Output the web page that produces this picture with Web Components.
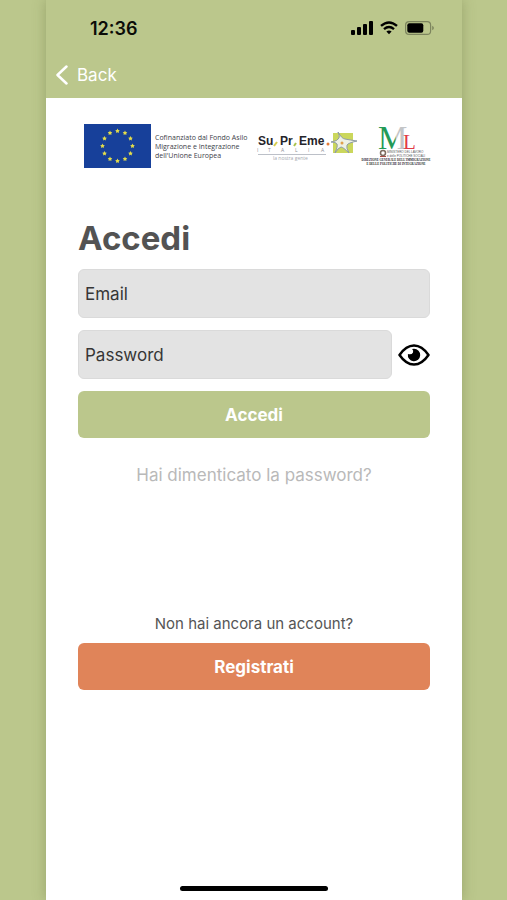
<!DOCTYPE html>
<html lang="it">
<head>
<meta charset="utf-8">
<meta name="viewport" content="width=device-width, initial-scale=1">
<title>Accedi</title>
<style>
  body { margin: 0; background: #bbc78c; font-family: Inter, "Noto Sans", sans-serif; }
</style>
</head>
<body>
<phone-screen>
  <status-bar slot="header" time="12:36"></status-bar>
  <nav-back slot="header">Back</nav-back>
  <partner-logos></partner-logos>
  <login-form></login-form>
  <register-prompt></register-prompt>
</phone-screen>
<script>
const define = (name, html, setup) => {
  const template = document.createElement('template');
  template.innerHTML = html;
  customElements.define(name, class extends HTMLElement {
    constructor() {
      super();
      this.attachShadow({ mode: 'open' }).append(template.content.cloneNode(true));
    }
    connectedCallback() { if (setup) setup(this, this.shadowRoot); }
  });
};

define('phone-screen', `
  <style>
    :host { display: flex; flex-direction: column; box-sizing: border-box; min-height: 100vh; margin: 0 45px 0 46px; background: #fff; box-shadow: 0 0 12px rgba(90, 100, 50, .35); }
    header { background: #bbc78c; height: 98px; display: flex; flex-direction: column; }
    main { flex: 1; padding: 26px 32px; display: flex; flex-direction: column; }
    footer { padding-bottom: 9px; display: flex; justify-content: center; }
    .home { width: 148px; height: 5px; border-radius: 3px; background: #000; }
  </style>
  <header><slot name="header"></slot></header>
  <main><slot></slot></main>
  <footer><div class="home"></div></footer>`);

define('status-bar', `
  <style>
    :host { display: flex; align-items: center; justify-content: space-between; height: 56px; padding: 0 28px 0 44px; color: #0b0c08; }
    time { font-size: 18px; font-weight: 600; }
    .icons { display: flex; align-items: center; gap: 7px; }
    svg { display: block; }
  </style>
  <time></time>
  <div class="icons">
    <svg width="22" height="14" viewBox="0 0 22 14" fill="#000" aria-label="Segnale"><rect x="0" y="9" width="4" height="5" rx="1"/><rect x="6" y="6" width="4" height="8" rx="1"/><rect x="12" y="3" width="4" height="11" rx="1"/><rect x="18" y="0" width="4" height="14" rx="1"/></svg>
    <svg width="18" height="14" viewBox="0 0 18 14" fill="none" stroke="#000" stroke-width="2.4" aria-label="Wi-Fi"><path d="M1 4.900Q9-2 17 4.900M4 8.200Q9 4 14 8.200"/><path d="M6.400 10.500Q9 8.400 11.600 10.500L9 13.300z" fill="#000" stroke="none"/></svg>
    <svg width="29" height="14" viewBox="0 0 29 14" aria-label="Batteria"><rect x=".6" y=".6" width="25" height="12.800" rx="3.500" fill="none" stroke="#7d855e" stroke-width="1.200"/><rect x="2.300" y="2.300" width="16" height="9.400" rx="2" fill="#000"/><path d="M27.200 4.800q1.700.7 1.700 2.200t-1.700 2.200z" fill="#7d855e"/></svg>
  </div>`, (host, root) => { root.querySelector('time').textContent = host.getAttribute('time'); });

define('nav-back', `
  <style>
    :host { display: flex; padding: 4px 10px; }
    button { display: flex; align-items: center; gap: 9px; height: 30px; padding: 0; border: 0; background: none; color: #fff; font: 400 17px/30px Inter, sans-serif; }
  </style>
  <button type="button"><svg width="12" height="20" viewBox="0 0 12 20" fill="none" stroke="#fff" stroke-width="2.500" stroke-linecap="round" stroke-linejoin="round" aria-hidden="true"><path d="M10.500 1.500L1.500 10l9 8.500"/></svg><slot></slot></button>`);

define('partner-logos', `
  <style>
    :host { display: flex; justify-content: flex-end; gap: 6px; height: 44px; padding-right: 2px; }
    svg { display: block; min-width: 0; overflow: visible; }
  </style>
  <svg width="166" height="44" viewBox="0 0 166 44">
    <rect width="67" height="44" fill="#17409a"/>
    <g id="stars" fill="#e3dc4a"></g>
    <g font-family="Open Sans, sans-serif" font-size="7" fill="#3d4149">
      <text x="71" y="16">Cofinanziato dal Fondo Asilo</text>
      <text x="71" y="25">Migrazione e Integrazione</text>
      <text x="71" y="34">dell'Unione Europea</text>
    </g>
  </svg>
  <svg width="104" height="44" viewBox="0 0 104 44">
    <rect x="77" y="9" width="20" height="20" fill="#cbd75c"/>
    <path d="M82 8Q86 15 89 15Q94 16 101 17Q92 19 91 21Q90 24 93 29Q87 23 85 23Q82 24 79 29Q82 22 81 20Q80 18 75 18Q82 17 83 14Q84 12 82 8z" fill="#eef1e4" stroke="#8f9ca6" stroke-width="1"/>
    <circle cx="86" cy="19" r="1.500" fill="#e0a04c"/>
    <g font-family="Liberation Sans, sans-serif" font-size="12" font-weight="700" fill="#24242a">
      <text x="2" y="21">Su</text><text x="24" y="21">Pr</text><text x="43" y="21">Eme</text>
    </g>
    <path d="M18 22l3-4" stroke="#d6ce4f" stroke-width="2"/><path d="M38 22l2-3" stroke="#a9c34d" stroke-width="2"/><circle cx="72" cy="20" r="1.500" fill="#e47b38"/>
    <g font-family="Open Sans, sans-serif" font-size="5" fill="#8f9199">
      <text x="1" y="28">I</text><text x="12" y="28">T</text><text x="25" y="28">A</text><text x="39" y="28">L</text><text x="52" y="28">I</text><text x="65" y="28">A</text>
    </g>
    <path d="M2 30.500H70" stroke="#bcc0c8" stroke-width="1"/>
    <text x="17" y="36" font-family="Open Sans, sans-serif" font-size="5" fill="#a6a9b0">la nostra gente</text>
  </svg>
  <svg width="62" height="44" viewBox="0 0 62 44">
    <defs><linearGradient id="flag"><stop offset=".58" stop-color="#249a57"/><stop offset=".62" stop-color="#c3c5c7"/></linearGradient></defs>
    <g font-family="Liberation Serif, serif">
      <text x="12" y="25" font-size="33" fill="url(#flag)">M</text>
      <text x="37" y="25" font-size="21" fill="#e23a45">L</text>
    </g>
    <circle cx="17" cy="29" r="2.500" fill="none" stroke="#7d6c60" stroke-width="1.500"/><path d="M14 32.500h6" stroke="#a84b45" stroke-width="1"/>
    <g font-family="Liberation Sans, sans-serif" font-size="3" fill="#55555a">
      <text x="21" y="29">MINISTERO DEL LAVORO</text>
      <text x="21" y="33">e delle POLITICHE SOCIALI</text>
      <g font-family="Liberation Serif, serif" font-weight="700" text-anchor="middle" fill="#25252b">
        <text x="30" y="37">DIREZIONE GENERALE DELL'IMMIGRAZIONE</text>
        <text x="30" y="41">E DELLE POLITICHE DI INTEGRAZIONE</text>
      </g>
    </g>
  </svg>`, (host, root) => {
    const stars = root.getElementById('stars');
    for (let i = 0; i < 12; i++) {
      const a = i * Math.PI / 6;
      const cx = 33.5 + 15 * Math.sin(a), cy = 22 - 15 * Math.cos(a);
      const points = [];
      for (let k = 0; k < 10; k++) {
        const r = k % 2 ? 1.3 : 2.4, t = k * Math.PI / 5;
        points.push((cx + r * Math.sin(t)).toFixed(2) + ',' + (cy - r * Math.cos(t)).toFixed(2));
      }
      const star = document.createElementNS('http://www.w3.org/2000/svg', 'polygon');
      star.setAttribute('points', points.join(' '));
      stars.append(star);
    }
  });

define('text-field', `
  <style>
    :host { display: block; min-width: 0; }
    input { display: block; box-sizing: border-box; width: 100%; height: 49px; padding: 0 6px; border: 1px solid #dadada; border-radius: 6px; background: #e3e3e3; color: #333; font: 400 17px Inter, sans-serif; }
    input::placeholder { color: #363636; opacity: 1; }
  </style>
  <input>`, (host, root) => {
    const input = root.querySelector('input');
    input.type = host.getAttribute('type');
    input.placeholder = host.getAttribute('label');
    input.setAttribute('aria-label', host.getAttribute('label'));
  });

define('solid-button', `
  <style>
    :host { display: block; }
    button { display: block; width: 100%; height: 47px; padding: 0; border: 0; border-radius: 6px; background: var(--fill, #bbc78c); color: #fff; font: 700 17px Inter, sans-serif; }
  </style>
  <button type="button"><slot></slot></button>`);

define('login-form', `
  <style>
    :host { display: block; margin-top: 51px; }
    form { display: flex; flex-direction: column; gap: 12px; }
    h1 { margin: 0; color: #535353; font-size: 33px; line-height: 38px; }
    .row { display: flex; align-items: center; gap: 6px; }
    .row text-field { flex: 1; }
    .eye { display: block; padding: 0; border: 0; background: none; }
    svg { display: block; }
    a { align-self: center; margin-top: 12px; color: #b9b9b9; font-size: 17px; line-height: 26px; text-decoration: none; }
  </style>
  <form>
    <h1>Accedi</h1>
    <text-field type="email" label="Email"></text-field>
    <div class="row">
      <text-field type="password" label="Password"></text-field>
      <button class="eye" type="button" aria-label="Mostra password">
        <svg width="32" height="22" viewBox="0 0 32 22"><path d="M1.500 11Q8 1.500 16 1.500T30.500 11Q24 20.500 16 20.500T1.500 11z" fill="none" stroke="#000" stroke-width="2.500" stroke-linejoin="round"/><path d="M16 4.800a6.200 6.200 0 1 1-6.100 5.200q3.600 1 5-1.200 1-2-.8-3.700 1-.3 1.900-.3z" fill="#000"/></svg>
      </button>
    </div>
    <solid-button>Accedi</solid-button>
    <a href="#recupera">Hai dimenticato la password?</a>
  </form>`);

define('register-prompt', `
  <style>
    :host { display: block; margin-top: 126px; --fill: #e08459; }
    p { margin: 0 0 9px; color: #555; font-size: 15px; line-height: 20px; text-align: center; }
  </style>
  <p>Non hai ancora un account?</p>
  <solid-button>Registrati</solid-button>`);
</script>
</body>
</html>
